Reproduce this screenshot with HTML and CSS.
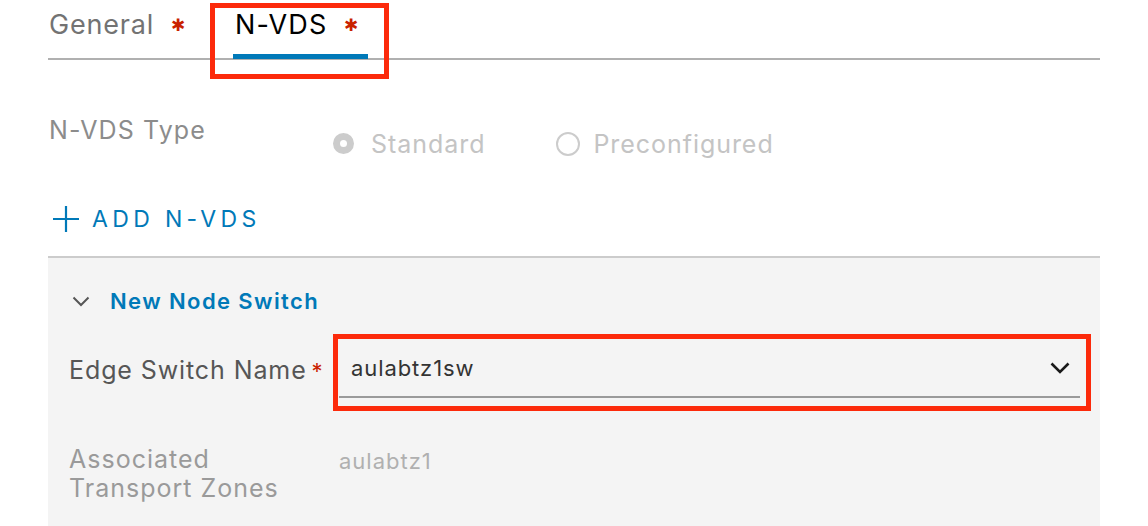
FILE: index.html
```html
<!DOCTYPE html>
<html>
<head>
<meta charset="utf-8">
<link rel="stylesheet" href="styles.css">
</head>
<body>
<div class="page">
  <div class="tabs">
    <div class="tab tab-general">
      <span class="tab-label">General</span>
      <span class="req">&#x2731;</span>
    </div>
    <div class="tab tab-active">
      <span class="tab-label">N-VDS</span>
      <span class="req">&#x2731;</span>
      <span class="annot annot-tab"></span>
    </div>
  </div>

  <div class="type-row">
    <div class="type-label">N-VDS Type</div>
    <div class="radios">
      <label class="radio">
        <span class="radio-dot radio-checked"></span>
        <span class="radio-text">Standard</span>
      </label>
      <label class="radio radio-empty">
        <span class="radio-dot"></span>
        <span class="radio-text">Preconfigured</span>
      </label>
    </div>
  </div>

  <div class="add-row">
    <svg class="plus" width="28" height="28" viewBox="0 0 28 28">
      <path d="M14 1 V27 M1 14 H27" stroke="#0079b8" stroke-width="2.2" fill="none"/>
    </svg>
    <span class="add-text">ADD N-VDS</span>
  </div>

  <div class="panel">
    <div class="panel-head">
      <svg class="caret" width="18" height="11" viewBox="0 0 18 11">
        <path d="M1.5 1.5 L9 9 L16.5 1.5" stroke="#565656" stroke-width="2" fill="none"/>
      </svg>
      <span class="panel-title">New Node Switch</span>
    </div>

    <div class="field-row">
      <div class="field-label">Edge Switch Name<span class="req req-small">*</span></div>
      <div class="select-wrap">
        <div class="select">
          <span class="select-value">aulabtz1sw</span>
          <svg class="select-caret" width="20" height="12" viewBox="0 0 20 12">
            <path d="M1.5 1.5 L10 10 L18.5 1.5" stroke="#1a1a1a" stroke-width="2.6" fill="none"/>
          </svg>
        </div>
        <span class="annot annot-select"></span>
      </div>
    </div>

    <div class="zone-row">
      <div class="zone-label">Associated<br>Transport Zones</div>
      <div class="zone-value">aulabtz1</div>
    </div>
  </div>
</div>
</body>
</html>
```

FILE: styles.css
```css
html, body {
  margin: 0;
  padding: 0;
  background: #ffffff;
}

body {
  font-family: "Inter", "Open Sans", sans-serif;
  overflow: hidden;
}

.page {
  width: 1052px;
  margin-left: 48px;
}

/* Tabs */
.tabs {
  display: flex;
  gap: 47px;
  height: 58px;
  border-bottom: 2px solid #b0b0b0;
}

.tab {
  position: relative;
  display: flex;
  align-items: flex-start;
  padding-top: 8px;
  box-sizing: border-box;
  height: 60px;
}

.tab-general {
  width: 138px;
  padding-left: 1px;
}

.tab-label {
  font-size: 27px;
  line-height: 34px;
  color: #737373;
  letter-spacing: 0.8px;
}

.tab-active {
  width: 135px;
  padding-left: 2px;
  border-bottom: 5px solid #0079b8;
  height: 59px;
}

.tab-active .tab-label {
  color: #000000;
  letter-spacing: 1.1px;
}

.req {
  color: #c92100;
  font-size: 17px;
  line-height: 34px;
  margin-left: auto;
  padding-right: 1px;
}

.tab-active .req {
  padding-right: 10px;
}

.annot {
  position: absolute;
  border: 5px solid #fc2a0b;
  box-sizing: border-box;
  pointer-events: none;
}

.annot-tab {
  left: -23px;
  top: 3px;
  width: 179px;
  height: 76px;
}

/* N-VDS type */
.type-row {
  display: flex;
  margin-top: 58px;
  height: 44px;
}

.type-label {
  width: 284px;
  padding-left: 1px;
  font-size: 25px;
  line-height: 24px;
  color: #8c8c8c;
  letter-spacing: 1.1px;
}

.radios {
  display: flex;
  gap: 71px;
  padding-top: 7px;
}

.radio {
  display: flex;
  align-items: center;
  gap: 17px;
}

.radio-empty {
  gap: 13px;
}

.radio-dot {
  width: 24px;
  height: 24px;
  border-radius: 50%;
  border: 2px solid #cccccc;
  box-sizing: border-box;
}

.radio-checked {
  width: 21px;
  height: 21px;
  border: 7px solid #cccccc;
  background: #ffffff;
}

.radio-text {
  font-size: 25px;
  line-height: 24px;
  color: #c4c4c4;
  letter-spacing: 0.95px;
}

/* Add */
.add-row {
  display: flex;
  align-items: center;
  height: 52px;
  margin-top: 31px;
  gap: 12px;
  padding-left: 4px;
}

.add-text {
  font-size: 23px;
  color: #0079b8;
  letter-spacing: 4.35px;
}

/* Panel */
.panel {
  margin-top: 11px;
  border-top: 2px solid #cccccc;
  background: #f4f4f4;
  height: 268px;
  padding-left: 21px;
  padding-right: 9px;
}

.panel-head {
  display: flex;
  align-items: center;
  gap: 20px;
  padding-top: 30px;
  padding-left: 3px;
  height: 26px;
}

.panel-title {
  font-size: 22px;
  font-weight: 600;
  color: #0079b8;
  letter-spacing: 1.4px;
}

.field-row {
  display: flex;
  align-items: center;
  margin-top: 20px;
}

.field-label {
  width: 264px;
  font-size: 25px;
  color: #565656;
  letter-spacing: 0.9px;
  margin-top: -4px;
}

.req-small {
  color: #c92100;
  font-size: 22px;
  margin-left: 5px;
}

.select-wrap {
  position: relative;
  flex: 1;
  padding: 5px 11px 13px 6px;
}

.select {
  display: flex;
  align-items: center;
  justify-content: space-between;
  height: 59px;
  border-bottom: 2px solid #9a9a9a;
  padding-left: 12px;
  padding-right: 10px;
  box-sizing: border-box;
}

.select-value {
  font-size: 22px;
  color: #333333;
  letter-spacing: 0.9px;
}

.annot-select {
  left: 0;
  top: 0;
  right: 0;
  bottom: 0;
}

.zone-row {
  display: flex;
  margin-top: 34px;
}

.zone-label {
  width: 270px;
  font-size: 25px;
  line-height: 29px;
  color: #9a9a9a;
  letter-spacing: 1px;
}

.zone-value {
  font-size: 22px;
  line-height: 29px;
  padding-top: 2px;
  color: #b0b0b0;
  letter-spacing: 1px;
}
```
